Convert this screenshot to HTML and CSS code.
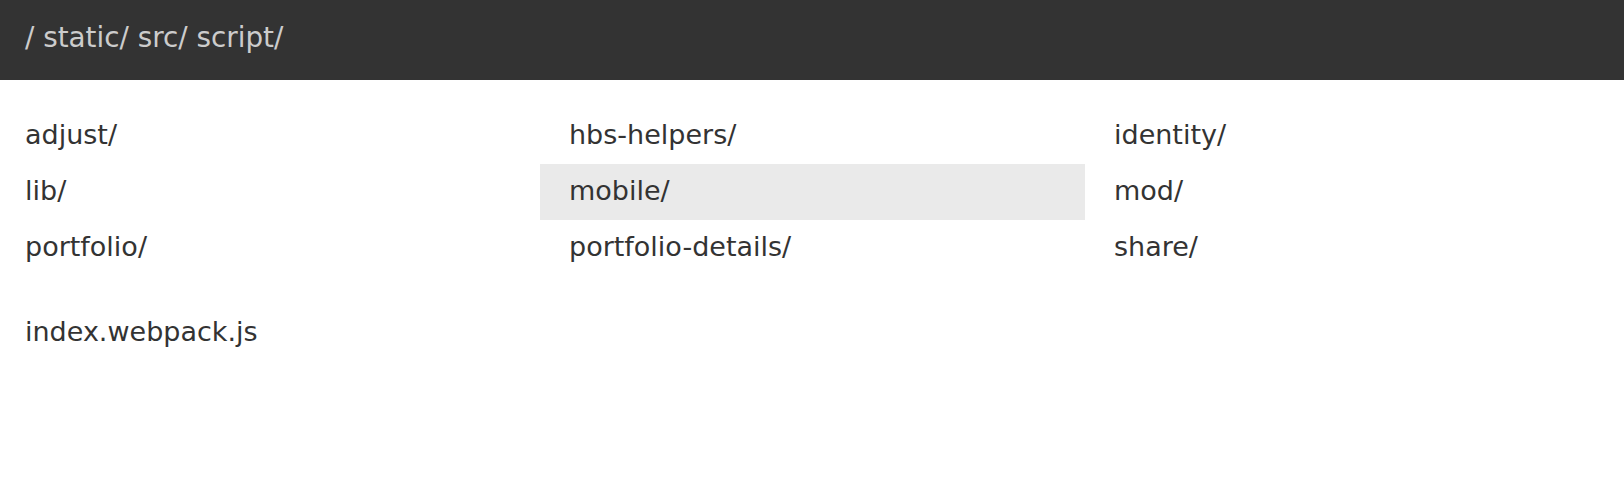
FILE: index.html
```html
<!DOCTYPE html>
<html>
<head>
<meta charset="utf-8">
<link rel="stylesheet" href="styles.css">
</head>
<body>
<div class="header">/ static/ src/ script/</div>
<div class="content">
  <ul class="dirs">
    <li class="item">adjust/</li>
    <li class="item">hbs-helpers/</li>
    <li class="item">identity/</li>
    <li class="item">lib/</li>
    <li class="item active">mobile/</li>
    <li class="item">mod/</li>
    <li class="item">portfolio/</li>
    <li class="item">portfolio-details/</li>
    <li class="item">share/</li>
  </ul>
  <ul class="files">
    <li class="item">index.webpack.js</li>
  </ul>
</div>
</body>
</html>
```
FILE: styles.css
```css
html, body {
  margin: 0;
  padding: 0;
  background: #ffffff;
}
body {
  font-family: "DejaVu Sans", sans-serif;
  color: #333333;
}
.header {
  height: 80px;
  box-sizing: border-box;
  background: #333333;
  color: #cccccc;
  font-size: 27.8px;
  padding: 0 0 6px 25px;
  display: flex;
  align-items: center;
}
.content {
  padding-top: 28px;
}
.dirs, .files {
  list-style: none;
  margin: 0 0 0 -4px;
  padding: 0;
  display: grid;
  grid-template-columns: 544px 545px 545px;
}
.files {
  margin-top: 29px;
}
.item {
  height: 56px;
  box-sizing: border-box;
  padding: 0 0 4px 29px;
  display: flex;
  align-items: center;
  font-size: 27px;
}
.item.active {
  background: #eaeaea;
}
```
